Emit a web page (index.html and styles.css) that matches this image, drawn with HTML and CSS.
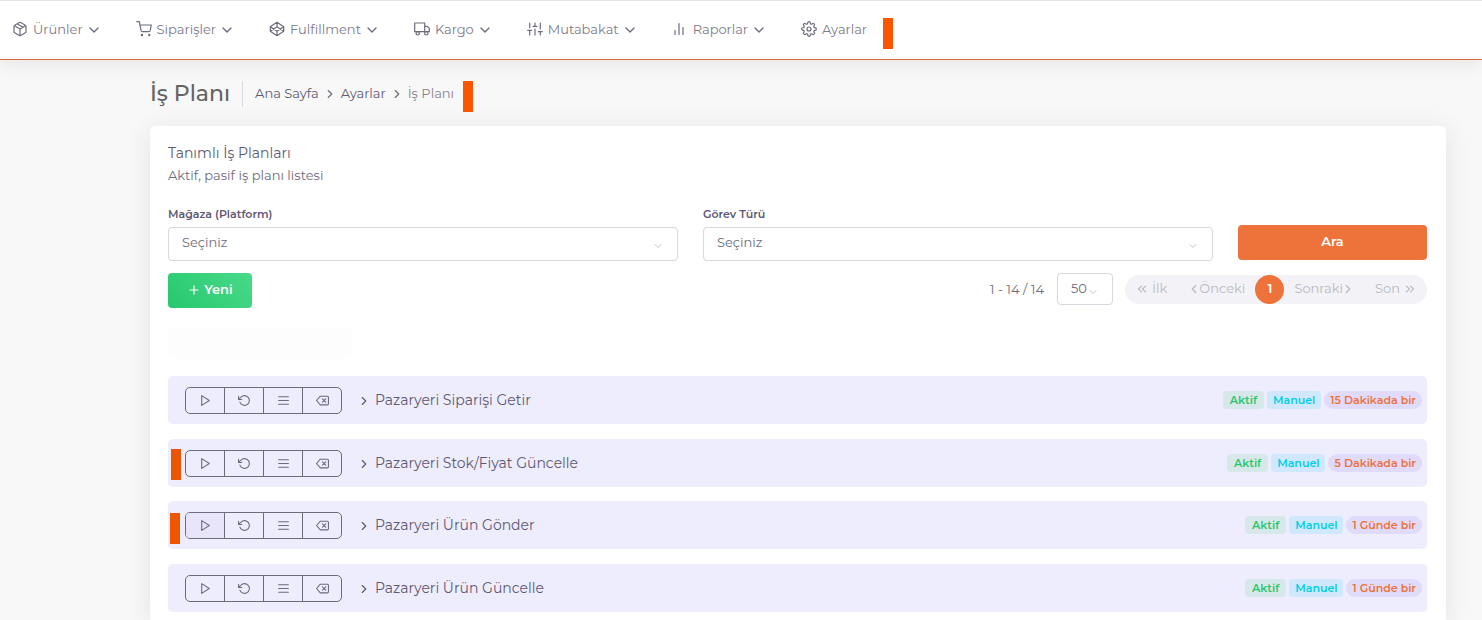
FILE: index.html
```html
<!DOCTYPE html>
<html lang="tr">
<head>
<meta charset="utf-8">
<meta name="viewport" content="width=device-width, initial-scale=1">
<title>İş Planı</title>
<link rel="stylesheet" href="styles.css">
</head>
<body>
<svg class="defs" aria-hidden="true">
  <symbol id="down" viewBox="0 0 24 24"><path d="M6 9l6 6 6-6"/></symbol>
  <symbol id="right" viewBox="0 0 24 24"><path d="M9 18l6-6-6-6"/></symbol>
  <symbol id="left" viewBox="0 0 24 24"><path d="M15 18l-6-6 6-6"/></symbol>
  <symbol id="first" viewBox="0 0 24 24"><path d="M11 17l-5-5 5-5M18 17l-5-5 5-5"/></symbol>
  <symbol id="last" viewBox="0 0 24 24"><path d="M13 17l5-5-5-5M6 17l5-5-5-5"/></symbol>
  <symbol id="plus" viewBox="0 0 24 24"><path d="M12 5v14M5 12h14"/></symbol>
  <symbol id="play" viewBox="0 0 24 24"><path d="M5 3l14 9-14 9z"/></symbol>
  <symbol id="reset" viewBox="0 0 24 24"><path d="M1 4v6h6M3.5 15a9 9 0 1 0 2.1-9.4L1 10"/></symbol>
  <symbol id="list" viewBox="0 0 24 24"><path d="M3 12h18M3 5h18M3 19h18"/></symbol>
  <symbol id="delete" viewBox="0 0 24 24"><path d="M21 4H8l-7 8 7 8h13a2 2 0 0 0 2-2V6a2 2 0 0 0-2-2zM18 9l-6 6M12 9l6 6"/></symbol>
</svg>

<header class="topbar">
  <nav class="menu">
    <a href="#" class="menu-link"><svg class="icon"><path d="M11 6.3L5 2.8M14 10.7V5.3a1.3 1.3 0 0 0-.7-1.1L8.7 1.5a1.3 1.3 0 0 0-1.4 0L2.7 4.2A1.3 1.3 0 0 0 2 5.3v5.4a1.3 1.3 0 0 0 .7 1.1l4.6 2.7a1.3 1.3 0 0 0 1.4 0l4.6-2.7a1.3 1.3 0 0 0 .7-1.1zM2.2 4.6L8 8l5.8-3.4M8 14.7V8"/></svg>Ürünler<svg class="caret"><use href="#down"/></svg></a>
    <a href="#" class="menu-link"><svg class="icon"><path d="M.7.7h2.6l1.8 9a1.3 1.3 0 0 0 1.3 1h6.5a1.3 1.3 0 0 0 1.3-1L15.3 4H4"/><circle cx="6" cy="14" r=".6"/><circle cx="13.3" cy="14" r=".6"/></svg>Siparişler<svg class="caret"><use href="#down"/></svg></a>
    <a href="#" class="menu-link"><svg class="icon"><path d="M8 1.3l6.7 4.4v4.6L8 14.7l-6.7-4.4V5.7zM8 14.7v-4.4M14.7 5.7L8 10.3 1.3 5.7M1.3 10.3L8 5.7l6.7 4.6M8 1.3v4.4"/></svg>Fulfillment<svg class="caret"><use href="#down"/></svg></a>
    <a href="#" class="menu-link"><svg class="icon"><path d="M.7 2h10v8.700H.7zM10.700 5.300h2.600l2 2v3.400h-4.600z"/><circle cx="3.700" cy="12.300" r="1.700"/><circle cx="12.300" cy="12.300" r="1.700"/></svg>Kargo<svg class="caret"><use href="#down"/></svg></a>
    <a href="#" class="menu-link"><svg class="icon"><path d="M2.700 14V9.300M2.700 6.700V2M8 14V8M8 5.300V2M13.300 14v-3.300M13.300 8V2M.7 9.300h4M6 5.300h4M11.300 10.700h4"/></svg>Mutabakat<svg class="caret"><use href="#down"/></svg></a>
    <a href="#" class="menu-link"><svg class="icon"><path d="M11 13.500V6.500M7 13.500V2.500M3 13.500V9.500"/></svg>Raporlar<svg class="caret"><use href="#down"/></svg></a>
    <a href="#" class="menu-link"><svg class="icon" viewBox="0 0 24 24"><g stroke-width="1.8"><circle cx="12" cy="12" r="3"/><path d="M19.400 15a1.650 1.650 0 0 0 .33 1.820l.06.06a2 2 0 0 1-2.830 2.830l-.06-.06a1.650 1.650 0 0 0-2.800 1.170V21a2 2 0 0 1-4 0v-.09a1.650 1.650 0 0 0-2.900-1.260l-.06.06a2 2 0 0 1-2.830-2.830l.06-.06A1.650 1.650 0 0 0 3.090 14H3a2 2 0 0 1 0-4h.09a1.650 1.650 0 0 0 1.260-2.820l-.06-.06a2 2 0 0 1 2.830-2.830l.06.06A1.650 1.650 0 0 0 10 3.090V3a2 2 0 0 1 4 0v.09a1.650 1.650 0 0 0 2.820 1.260l.06-.06a2 2 0 0 1 2.830 2.830l-.06.06A1.650 1.650 0 0 0 20.910 10H21a2 2 0 0 1 0 4h-.09a1.650 1.650 0 0 0-1.510 1z"/></g></svg>Ayarlar<span class="marker marker-nav"></span></a>
  </nav>
</header>

<main class="page">
  <div class="heading">
    <h1>İş Planı</h1>
    <nav class="crumbs">
      <a href="#">Ana Sayfa</a><svg class="sep"><use href="#right"/></svg>
      <a href="#">Ayarlar</a><svg class="sep"><use href="#right"/></svg>
      <span class="current">İş Planı<span class="marker marker-crumb"></span></span>
    </nav>
  </div>

  <section class="card">
    <h2>Tanımlı İş Planları</h2>
    <p class="subtitle">Aktif, pasif iş planı listesi</p>

    <form class="filters">
      <div class="field">
        <label for="store">Mağaza (Platform)</label>
        <div class="select"><select id="store"><option>Seçiniz</option></select><svg><use href="#down"/></svg></div>
      </div>
      <div class="field">
        <label for="task">Görev Türü</label>
        <div class="select"><select id="task"><option>Seçiniz</option></select><svg><use href="#down"/></svg></div>
      </div>
      <button type="button" class="search">Ara</button>
    </form>

    <div class="toolbar">
      <button type="button" class="new"><svg><use href="#plus"/></svg>Yeni</button>
      <div class="paging">
        <span class="range">1 - 14 / 14</span>
        <div class="select size"><select aria-label="Sayfa boyutu"><option>50</option></select><svg><use href="#down"/></svg></div>
        <nav class="pager">
          <a href="#" class="first"><svg><use href="#first"/></svg>İlk</a>
          <a href="#" class="prev"><svg><use href="#left"/></svg>Önceki</a>
          <a href="#" class="active">1</a>
          <a href="#" class="next">Sonraki<svg><use href="#right"/></svg></a>
          <a href="#" class="last">Son<svg><use href="#last"/></svg></a>
        </nav>
      </div>
    </div>

    <div class="group-head"></div>

    <div class="plans">
      <article class="plan">
        <div class="actions">
          <button type="button" aria-label="Çalıştır"><svg><use href="#play"/></svg></button><button type="button" aria-label="Sıfırla"><svg><use href="#reset"/></svg></button><button type="button" aria-label="Liste"><svg><use href="#list"/></svg></button><button type="button" aria-label="Sil"><svg><use href="#delete"/></svg></button>
        </div>
        <a href="#" class="name"><svg><use href="#right"/></svg>Pazaryeri Siparişi Getir</a>
        <div class="tags"><span class="tag on">Aktif</span><span class="tag manual">Manuel</span><span class="tag period">15 Dakikada bir</span></div>
      </article>
      <article class="plan">
        <span class="marker marker-second"></span>
        <div class="actions">
          <button type="button" aria-label="Çalıştır"><svg><use href="#play"/></svg></button><button type="button" aria-label="Sıfırla"><svg><use href="#reset"/></svg></button><button type="button" aria-label="Liste"><svg><use href="#list"/></svg></button><button type="button" aria-label="Sil"><svg><use href="#delete"/></svg></button>
        </div>
        <a href="#" class="name"><svg><use href="#right"/></svg>Pazaryeri Stok/Fiyat Güncelle</a>
        <div class="tags"><span class="tag on">Aktif</span><span class="tag manual">Manuel</span><span class="tag period">5 Dakikada bir</span></div>
      </article>
      <article class="plan">
        <span class="marker marker-third"></span>
        <div class="actions">
          <button type="button" class="hovered" aria-label="Çalıştır"><svg><use href="#play"/></svg></button><button type="button" aria-label="Sıfırla"><svg><use href="#reset"/></svg></button><button type="button" aria-label="Liste"><svg><use href="#list"/></svg></button><button type="button" aria-label="Sil"><svg><use href="#delete"/></svg></button>
        </div>
        <a href="#" class="name"><svg><use href="#right"/></svg>Pazaryeri Ürün Gönder</a>
        <div class="tags"><span class="tag on">Aktif</span><span class="tag manual">Manuel</span><span class="tag period">1 Günde bir</span></div>
      </article>
      <article class="plan">
        <div class="actions">
          <button type="button" aria-label="Çalıştır"><svg><use href="#play"/></svg></button><button type="button" aria-label="Sıfırla"><svg><use href="#reset"/></svg></button><button type="button" aria-label="Liste"><svg><use href="#list"/></svg></button><button type="button" aria-label="Sil"><svg><use href="#delete"/></svg></button>
        </div>
        <a href="#" class="name"><svg><use href="#right"/></svg>Pazaryeri Ürün Güncelle</a>
        <div class="tags"><span class="tag on">Aktif</span><span class="tag manual">Manuel</span><span class="tag period">1 Günde bir</span></div>
      </article>
    </div>
  </section>
</main>
</body>
</html>
```
FILE: styles.css
```css
* { box-sizing: border-box; }

body {
  margin: 0;
  min-height: 100vh;
  display: flex;
  flex-direction: column;
  background: #f8f8f8;
  color: #6e6b7b;
  font: 13px/20px Montserrat, Inter, "Open Sans", sans-serif;
}

a { color: inherit; text-decoration: none; }
button, select { font: inherit; color: inherit; }
button { padding: 0; border: 0; cursor: pointer; }

svg {
  flex: none;
  fill: none;
  stroke: currentColor;
  stroke-width: 2;
  stroke-linecap: round;
  stroke-linejoin: round;
}

.defs { display: none; }

.topbar {
  position: relative;
  height: 60px;
  padding: 0 12px 2px;
  display: flex;
  align-items: center;
  background: #fff;
  border-top: 1px solid #e4e4e4;
  border-bottom: 1px solid #e0693a;
  box-shadow: 0 4px 20px rgba(0, 0, 0, 0.08);
}

.menu { display: flex; gap: 34px; }
.menu-link {
  position: relative;
  display: flex;
  align-items: center;
  color: #7d7a8a;
}
.icon { width: 16px; height: 16px; margin-right: 5px; stroke-width: 1.2; color: #6e6b7b; }
.caret { width: 16px; height: 16px; margin: 2px 0 0 3px; color: #6e6b7b; }

.marker {
  position: absolute;
  width: 10px;
  height: 31px;
  background: #fb5500;
}
.marker-nav { left: calc(100% + 16px); top: -1px; }
.marker-crumb { left: calc(100% + 9px); top: -2px; }
.marker-second { left: 3px; top: 10px; background: #ee5500; }
.marker-third { left: 2px; top: 12px; background: #ee5500; }

.page {
  flex: 1;
  display: flex;
  flex-direction: column;
  padding: 21px 36px 0 150px;
}

.heading { display: flex; align-items: center; height: 26px; margin-bottom: 19px; }
.heading h1 {
  margin: 0;
  padding-right: 12px;
  border-right: 1px solid #d6dce1;
  font-size: 22px;
  line-height: 26px;
  font-weight: 500;
  color: #636363;
}
.crumbs { display: flex; align-items: center; padding: 0 0 2px 12px; color: #5e5873; }
.sep { width: 14px; height: 14px; margin: 2px 4px 0; color: #6e6b7b; }
.current { position: relative; color: #858291; }

.card {
  flex: 1;
  padding: 16px 19px 0 18px;
  background: #fff;
  border-radius: 5px 5px 0 0;
  box-shadow: 0 4px 24px rgba(34, 41, 47, 0.1);
}
.card h2 { margin: 0; font-size: 14px; line-height: 22px; font-weight: 400; color: #5e5873; }
.subtitle { margin: 0; line-height: 22px; }

.filters {
  display: grid;
  grid-template-columns: repeat(12, 1fr);
  column-gap: 25px;
  align-items: end;
  margin-top: 20px;
}
.field { grid-column: span 5; }
.field label {
  display: block;
  margin-bottom: 5px;
  font-size: 11px;
  line-height: 16px;
  font-weight: 600;
  color: #5e5873;
}
.select { position: relative; }
.select select {
  appearance: none;
  display: block;
  width: 100%;
  height: 34px;
  padding: 0 13px 4px;
  background: #fff;
  border: 1px solid #d8d6de;
  border-radius: 4px;
}
.select svg {
  position: absolute;
  right: 14px;
  top: 13px;
  width: 12px;
  height: 12px;
  color: #c4c3ca;
  pointer-events: none;
}
.search {
  grid-column: span 2;
  height: 35px;
  margin-bottom: 1px;
  padding-bottom: 3px;
  border-radius: 4px;
  background: #ee733a;
  color: #fff;
  font-weight: 600;
}

.toolbar {
  display: flex;
  align-items: flex-start;
  justify-content: space-between;
  margin-top: 12px;
}
.new {
  display: flex;
  align-items: center;
  justify-content: center;
  gap: 3px;
  width: 84px;
  height: 35px;
  padding-bottom: 3px;
  border-radius: 4px;
  background: linear-gradient(47deg, #28c76f, #48da89);
  color: #fff;
  font-weight: 600;
}
.new svg { width: 14px; height: 14px; margin-top: 2px; }

.paging { display: flex; align-items: center; }
.size { width: 56px; margin: 0 12px 0 13px; }
.size select { height: 32px; padding: 0 13px 2px; }

.pager {
  display: flex;
  align-items: center;
  width: 302px;
  height: 29px;
  border-radius: 15px;
  background: #f3f2f7;
  color: #b9b9c3;
}
.pager a { display: flex; align-items: center; flex: 1 1 auto; justify-content: center; padding-bottom: 2px; }
.pager svg { width: 14px; height: 14px; margin-top: 2px; }
.pager .prev svg { margin-right: -2px; }
.pager .next svg { margin-left: -2px; }
.first svg { margin-right: 3px; }
.last svg { margin-left: 3px; }
.pager .active {
  flex: none;
  width: 29px;
  height: 29px;
  border-radius: 50%;
  background: #ee733a;
  color: #fff;
  font-weight: 600;
}

.group-head {
  width: 184px;
  height: 32px;
  margin: 19px 0 17px;
  border-radius: 6px;
  background: #fdfdfd;
}

.plans { display: grid; gap: 15px; }
.plan {
  position: relative;
  display: flex;
  align-items: center;
  height: 48px;
  padding: 0 5px 0 17px;
  border-radius: 5px;
  background: #eeedfd;
}
.plan:nth-child(3) { margin: -1px 0 0; }
.actions {
  display: flex;
  width: 157px;
  height: 27px;
  border: 1px solid #6e6b7b;
  border-radius: 5px;
  overflow: hidden;
}
.actions button {
  flex: 1;
  display: grid;
  place-items: center;
  background: none;
}
.actions button + button { border-left: 1px solid #6e6b7b; }
.actions .hovered { background: #e8e5fb; }
.actions svg { width: 13px; height: 13px; }
.name {
  display: flex;
  align-items: center;
  gap: 4px;
  margin-left: 15px;
  font-size: 14px;
  color: #5e5873;
}
.name svg { width: 14px; height: 14px; margin-top: 2px; }
.tags { display: flex; gap: 3px; margin-left: auto; }
.tag {
  padding: 0 6px;
  border-radius: 4px;
  font-size: 11px;
  line-height: 18px;
  font-weight: 600;
}
.on { padding: 0 7px; background: #d6e8ea; color: #28c76f; }
.manual { background: #d1e8fc; color: #00cfe8; }
.period { border-radius: 9px; background: #e0dbfb; color: #ee733a; }
```
